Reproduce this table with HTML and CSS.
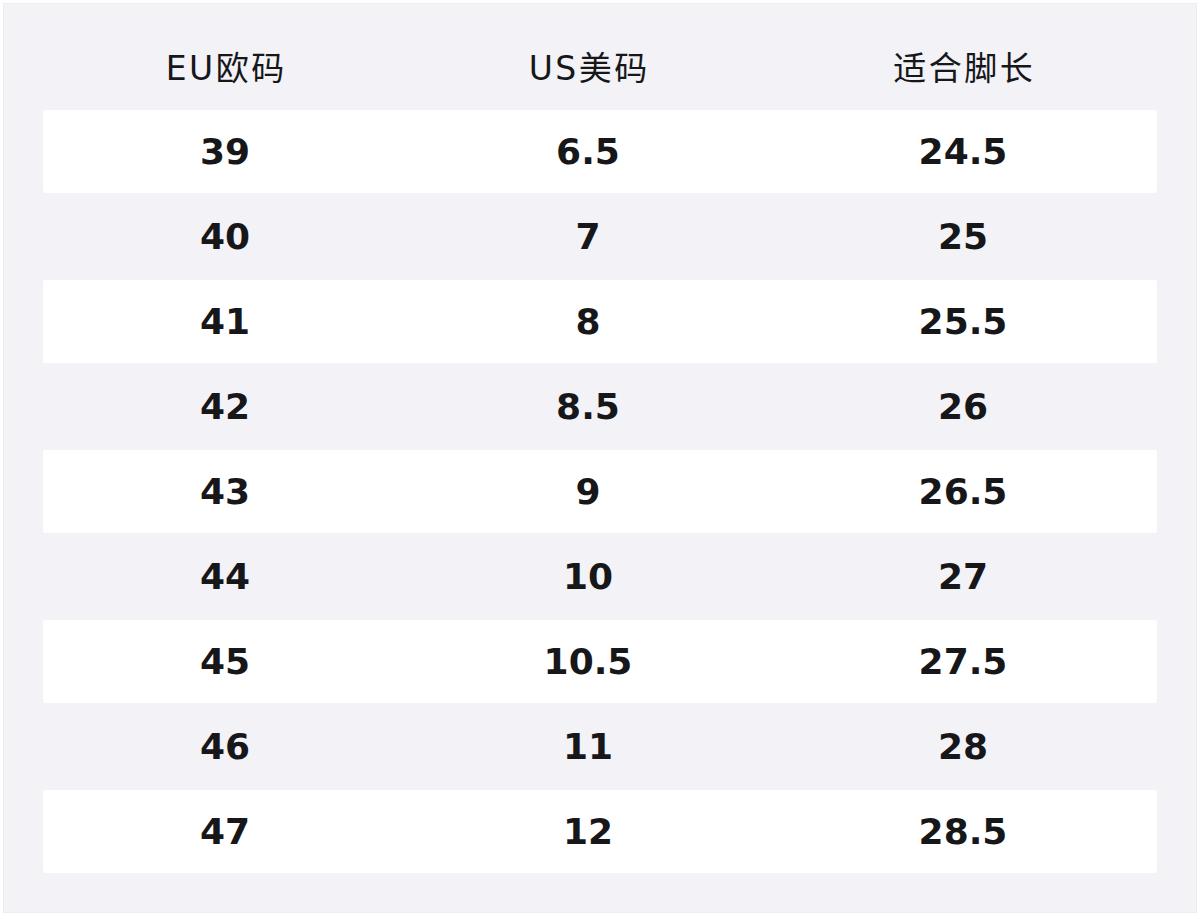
FILE: index.html
```html
<!DOCTYPE html>
<html lang="zh">
<head>
<meta charset="utf-8">
<link rel="stylesheet" href="styles.css">
</head>
<body>
<div class="panel">
  <div class="row head">
    <div class="cell">EU欧码</div>
    <div class="cell">US美码</div>
    <div class="cell">适合脚长</div>
  </div>
  <div class="row white"><div class="cell">39</div><div class="cell">6.5</div><div class="cell">24.5</div></div>
  <div class="row"><div class="cell">40</div><div class="cell">7</div><div class="cell">25</div></div>
  <div class="row white"><div class="cell">41</div><div class="cell">8</div><div class="cell">25.5</div></div>
  <div class="row"><div class="cell">42</div><div class="cell">8.5</div><div class="cell">26</div></div>
  <div class="row white"><div class="cell">43</div><div class="cell">9</div><div class="cell">26.5</div></div>
  <div class="row"><div class="cell">44</div><div class="cell">10</div><div class="cell">27</div></div>
  <div class="row white"><div class="cell">45</div><div class="cell">10.5</div><div class="cell">27.5</div></div>
  <div class="row"><div class="cell">46</div><div class="cell">11</div><div class="cell">28</div></div>
  <div class="row white"><div class="cell">47</div><div class="cell">12</div><div class="cell">28.5</div></div>
</div>
</body>
</html>
```
FILE: styles.css
```css
html, body {
  margin: 0;
  padding: 0;
  background: #ffffff;
}
body {
  padding: 3px;
  font-family: "DejaVu Sans", "Noto Sans CJK SC", sans-serif;
  color: #17171a;
}
.panel {
  width: 1194px;
  height: 910px;
  box-sizing: border-box;
  background: #f2f2f7;
  border: 1px solid #ececf1;
  padding: 19px 39px 39px 39px;
  display: flex;
  flex-direction: column;
  gap: 2px;
}
.row {
  display: grid;
  grid-template-columns: 364px 362px 1fr;
  height: 83px;
  align-items: center;
  font-weight: bold;
  font-size: 36px;
  border-radius: 2px;
}
.row.white {
  background: #ffffff;
}
.row.head {
  height: 85px;
  font-weight: normal;
  font-size: 33px;
  letter-spacing: 2.5px;
}
.row.head .cell {
  padding-left: 2.5px;
}
.cell {
  text-align: center;
}
```
